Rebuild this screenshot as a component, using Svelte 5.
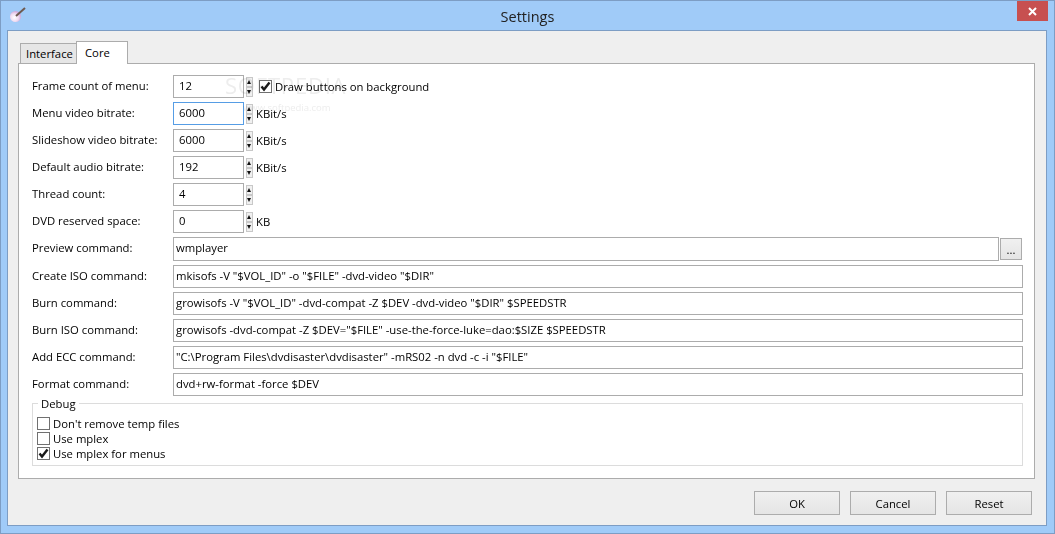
<script>
  const spins = [
    { label: 'Frame count of menu:', value: '12', check: 'Draw buttons on background' },
    { label: 'Menu video bitrate:', value: '6000', unit: 'KBit/s', focus: true },
    { label: 'Slideshow video bitrate:', value: '6000', unit: 'KBit/s' },
    { label: 'Default audio bitrate:', value: '192', unit: 'KBit/s' },
    { label: 'Thread count:', value: '4' },
    { label: 'DVD reserved space:', value: '0', unit: 'KB' }
  ];
  const commands = [
    { label: 'Preview command:', value: 'wmplayer', browse: true },
    { label: 'Create ISO command:', value: 'mkisofs -V "$VOL_ID" -o "$FILE" -dvd-video "$DIR"' },
    { label: 'Burn command:', value: 'growisofs -V "$VOL_ID" -dvd-compat -Z $DEV -dvd-video "$DIR" $SPEEDSTR' },
    { label: 'Burn ISO command:', value: 'growisofs -dvd-compat -Z $DEV="$FILE" -use-the-force-luke=dao:$SIZE $SPEEDSTR' },
    { label: 'Add ECC command:', value: '"C:\\Program Files\\dvdisaster\\dvdisaster" -mRS02 -n dvd -c -i "$FILE"' },
    { label: 'Format command:', value: 'dvd+rw-format -force $DEV' }
  ];
  const debug = [
    { label: "Don't remove temp files", on: false },
    { label: 'Use mplex', on: false },
    { label: 'Use mplex for menus', on: true }
  ];
</script>

{#snippet tick()}
  <svg width="11" height="11" viewBox="0 0 11 11"><path d="M1.5 5.5 L4 8.5 L9.5 1.5" fill="none" stroke="#1a1a1a" stroke-width="2.4" /></svg>
{/snippet}

<div class="window">
  <header class="titlebar">
    <svg class="appicon" width="18" height="18" viewBox="0 0 18 18">
      <defs>
        <radialGradient id="disc" cx="0.4" cy="0.6" r="0.6">
          <stop offset="0" stop-color="#ffffff" />
          <stop offset="0.6" stop-color="#f0dcf2" />
          <stop offset="1" stop-color="#cfa6d8" />
        </radialGradient>
      </defs>
      <circle cx="7.5" cy="10.5" r="5.5" fill="url(#disc)" />
      <path d="M8 10 L17 2" stroke="#6e5a50" stroke-width="2" />
    </svg>
    <span class="title">Settings</span>
    <div class="close">
      <svg width="9" height="9" viewBox="0 0 9 9"><path d="M1 1 L8 8 M8 1 L1 8" stroke="#fff" stroke-width="2" /></svg>
    </div>
  </header>

  <div class="client">
    <div class="tabs">
      <div class="tab">Interface</div>
      <div class="tab active">Core</div>
    </div>

    <div class="pane">
      <div class="form">
        {#each spins as s}
          <div class="label">{s.label}</div>
          <div class="field">
            <div class="input spin" class:focus={s.focus}>{s.value}</div>
            <div class="arrows">
              <div class="arrow up"></div>
              <div class="arrow down"></div>
            </div>
            {#if s.unit}<span class="unit">{s.unit}</span>{/if}
            {#if s.check}
              <span class="check inline"><span class="box">{@render tick()}</span>{s.check}</span>
            {/if}
          </div>
        {/each}
        {#each commands as c}
          <div class="label">{c.label}</div>
          <div class="field" class:tall={c.browse}>
            <div class="input wide">{c.value}</div>
            {#if c.browse}<div class="btn browse">...</div>{/if}
          </div>
        {/each}
      </div>

      <fieldset class="debug">
        <legend>Debug</legend>
        {#each debug as d}
          <div class="check">
            <span class="box">{#if d.on}{@render tick()}{/if}</span>{d.label}
          </div>
        {/each}
      </fieldset>

      <div class="watermark">
        <span class="wm-big">SOFTPEDIA</span>
        <span class="wm-small">www.softpedia.com</span>
      </div>
    </div>

    <footer class="buttons">
      <div class="btn">OK</div>
      <div class="btn">Cancel</div>
      <div class="btn">Reset</div>
    </footer>
  </div>
</div>

<style>
  :global(body) {
    margin: 0;
    background: #a0cbf8;
  }

  .window {
    box-sizing: border-box;
    width: 1055px;
    height: 534px;
    display: flex;
    flex-direction: column;
    background: #a0cbf8;
    border: 1px solid #7d9dc4;
    font-family: "Open Sans", "Noto Sans", sans-serif;
    font-size: 11.3px;
    color: #000;
  }

  .titlebar {
    height: 29px;
    flex: none;
    position: relative;
    display: flex;
    align-items: center;
    justify-content: center;
  }

  .title {
    font-size: 14.5px;
    color: #222;
    margin-top: 1px;
  }

  .appicon {
    position: absolute;
    left: 7px;
    top: 5px;
  }

  .close {
    position: absolute;
    right: 6px;
    top: 0;
    width: 31px;
    height: 20px;
    background: #c75050;
    display: flex;
    align-items: center;
    justify-content: center;
  }

  .client {
    flex: 1;
    margin: 0 7px 7px 6px;
    padding: 0 11px 0 10px;
    background: #efefef;
    border: 1px solid #7d9dc4;
    display: flex;
    flex-direction: column;
  }

  .tabs {
    display: flex;
    align-items: flex-end;
    height: 22px;
    margin-top: 10px;
    margin-left: 2px;
    position: relative;
    z-index: 1;
  }

  .tab {
    box-sizing: border-box;
    height: 20px;
    width: 57px;
    line-height: 19px;
    padding-left: 5px;
    background: #e6e6e6;
    border: 1px solid #acacac;
    border-bottom: none;
  }

  .tab.active {
    height: 23px;
    width: 52px;
    margin-bottom: -1px;
    margin-left: -1px;
    line-height: 21px;
    padding-left: 8px;
    background: #fff;
  }

  .pane {
    box-sizing: border-box;
    height: 416px;
    flex: none;
    position: relative;
    background: #fff;
    border: 1px solid #acacac;
    padding: 11px 11px 0 13px;
  }

  .watermark {
    position: absolute;
    left: 206px;
    top: 10px;
    display: flex;
    flex-direction: column;
    color: #ededed;
    line-height: 1;
    mix-blend-mode: multiply;
    pointer-events: none;
  }

  .wm-big {
    font-size: 22px;
    letter-spacing: 0.8px;
  }

  .wm-small {
    margin-left: 18px;
    margin-top: 7px;
    font-size: 9.5px;
  }

  .form {
    display: grid;
    grid-template-columns: 141px 1fr;
    grid-auto-rows: minmax(23px, auto);
    row-gap: 4px;
  }

  .label {
    line-height: 22px;
  }

  .field {
    display: flex;
    align-items: center;
    min-width: 0;
  }

  .field.tall {
    height: 24px;
  }

  .input {
    box-sizing: border-box;
    height: 100%;
    line-height: 20px;
    background: #fff;
    border: 1px solid #acacac;
    white-space: nowrap;
  }

  .spin {
    width: 71px;
    padding-left: 5px;
  }

  .wide {
    flex: 1;
    padding-left: 2px;
  }

  .focus {
    border-color: #569de5;
  }

  .arrows {
    display: flex;
    flex-direction: column;
    margin-left: 2px;
    width: 7px;
    height: 20px;
  }

  .arrow {
    flex: 1;
    box-sizing: border-box;
    background: #f0f0f0;
    border: 1px solid #c8c8c8;
    position: relative;
  }

  .arrow::after {
    content: "";
    position: absolute;
    left: 0;
    width: 0;
    height: 0;
    border-left: 2.5px solid transparent;
    border-right: 2.5px solid transparent;
  }

  .up::after {
    top: 2px;
    border-bottom: 4px solid #111;
  }

  .down::after {
    top: 2px;
    border-top: 4px solid #111;
  }

  .unit {
    margin-left: 3px;
  }

  .check {
    display: flex;
    align-items: center;
    height: 15px;
  }

  .check.inline {
    margin-left: 6px;
  }

  .box {
    box-sizing: border-box;
    flex: none;
    width: 13px;
    height: 13px;
    margin-right: 3px;
    border: 1px solid #707070;
    background: #fff;
    display: flex;
    align-items: center;
    justify-content: center;
  }

  .btn {
    box-sizing: border-box;
    display: flex;
    align-items: center;
    justify-content: center;
    background: linear-gradient(#f0f0f0, #e5e5e5);
    border: 1px solid #acacac;
  }

  .browse {
    width: 22px;
    height: 22px;
    margin: 0 1px;
    flex: none;
  }

  .debug {
    box-sizing: border-box;
    height: 71px;
    margin: -1px 0 0 0;
    padding: 5px 0 0 4px;
    border: 1px solid #dcdcdc;
    min-width: 0;
  }

  .debug legend {
    margin-left: 1px;
    padding: 2px 3px 0;
    line-height: 14px;
  }

  .buttons {
    display: flex;
    justify-content: flex-end;
    gap: 10px;
    margin-top: 12px;
    padding-right: 3px;
  }

  .buttons .btn {
    width: 86px;
    height: 24px;
  }
</style>
